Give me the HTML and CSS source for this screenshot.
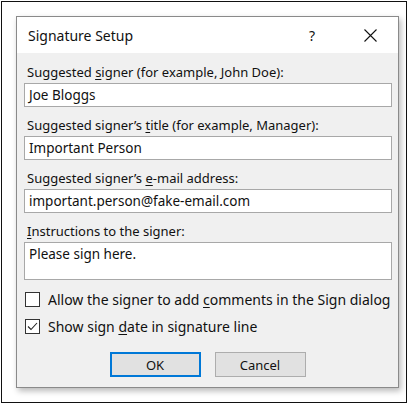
FILE: index.html
```html
<!DOCTYPE html>
<html>
<head>
<meta charset="utf-8">
<link rel="stylesheet" href="styles.css">
</head>
<body>
<div class="frame">
  <div class="dialog">
    <div class="titlebar">
      <span class="title">Signature Setup</span>
      <span class="help">?</span>
      <span class="close">
        <svg width="13" height="13" viewBox="0 0 13 13"><path d="M0.5 0.5 L12.5 12.5 M12.5 0.5 L0.5 12.5" stroke="#111" stroke-width="1.1" fill="none"/></svg>
      </span>
    </div>
    <div class="body">
      <div class="field">
        <div class="label">Suggested <u>s</u>igner (for example, John Doe):</div>
        <div class="input">Joe Bloggs</div>
      </div>
      <div class="field">
        <div class="label">Suggested signer’s <u>t</u>itle (for example, Manager):</div>
        <div class="input">Important Person</div>
      </div>
      <div class="field">
        <div class="label">Suggested signer’s <u>e</u>-mail address:</div>
        <div class="input">important.person@fake-email.com</div>
      </div>
      <div class="field">
        <div class="label"><u>I</u>nstructions to the signer:</div>
        <div class="input area">Please sign here.</div>
      </div>
      <div class="checks">
        <div class="check"><span class="box"></span><span>Allow the signer to add <u>c</u>omments in the Sign dialog</span></div>
        <div class="check"><span class="box"><svg width="13" height="13" viewBox="0 0 13 13"><path d="M2 6.5 L5 9.5 L11 3" stroke="#222" stroke-width="1.1" fill="none"/></svg></span><span>Show sign <u>d</u>ate in signature line</span></div>
      </div>
      <div class="buttons">
        <div class="btn default">OK</div>
        <div class="btn">Cancel</div>
      </div>
    </div>
  </div>
</div>
</body>
</html>
```
FILE: styles.css
```css
* { box-sizing: border-box; }
html, body { margin: 0; padding: 0; background: #fff; }
body {
  width: 410px;
  height: 406px;
  font-family: "Noto Sans", "Open Sans", sans-serif;
  font-size: 13px;
  color: #111;
}
.frame {
  margin: 1px 0 0 1px;
  width: 406px;
  height: 402px;
  border: 1px solid #111;
  padding: 14px 0 0 14px;
}
.dialog {
  width: 383px;
  height: 372px;
  border: 1px solid #8a8a8a;
  background: #f0f0f0;
  box-shadow: 2px 3px 6px rgba(0,0,0,0.28);
  display: flex;
  flex-direction: column;
}
.titlebar {
  height: 36px;
  background: #fff;
  display: flex;
  align-items: center;
  padding-left: 11px;
  font-size: 14px;
}
.title { flex: 1; }
.help { width: 14px; margin-right: 45px; text-align: center; font-size: 14px; }
.close { width: 13px; height: 13px; margin-right: 21px; display: flex; }
.body {
  flex: 1;
  padding: 11px 6px 0 7px;
  display: flex;
  flex-direction: column;
}
.field { display: flex; flex-direction: column; margin-bottom: 10px; }
.label { line-height: 16px; padding-left: 3px; margin-bottom: 3px; }
.input {
  height: 24px;
  background: #fff;
  border: 1px solid #a8a8a8;
  padding: 0 4px;
  line-height: 22px;
  white-space: nowrap;
  font-size: 13.5px;
}
.area { height: 38px; line-height: 20px; padding-top: 1px; }
.checks { display: flex; flex-direction: column; gap: 12px; margin-top: 2px; padding-left: 1px; font-size: 14px; }
.check { display: flex; align-items: center; gap: 8px; height: 15px; white-space: nowrap; }
.box {
  width: 15px; height: 15px;
  flex: none;
  border: 1px solid #333;
  background: #fff;
  display: flex; align-items: center; justify-content: center;
}
.buttons { display: flex; justify-content: center; gap: 14px; margin-top: 18px; padding-right: 1px; }
.btn {
  width: 91px; height: 25px;
  background: #e1e1e1;
  border: 1px solid #adadad;
  display: flex; align-items: center; justify-content: center;
}
.btn.default { border: 2px solid #0078d7; }
u { text-decoration-thickness: 1px; text-underline-offset: 2px; }
```
